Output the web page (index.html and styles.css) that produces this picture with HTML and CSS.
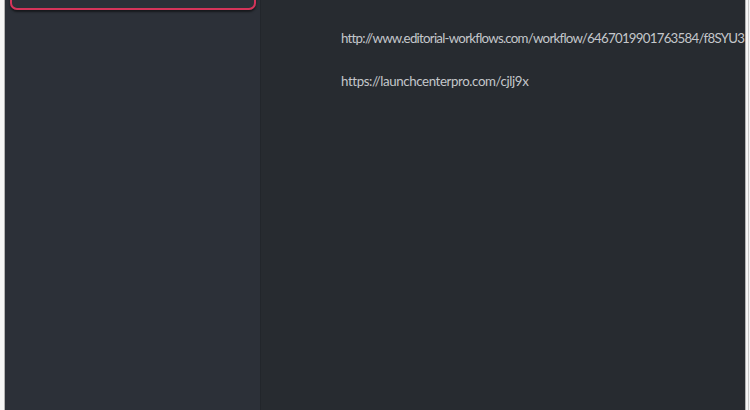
FILE: index.html
```html
<!DOCTYPE html>
<html>
<head>
<meta charset="utf-8">
<link rel="stylesheet" href="styles.css">
</head>
<body>
<div class="page">
  <div class="edge edge-left"></div>
  <aside class="sidebar">
    <div class="selected"></div>
  </aside>
  <main class="main">
    <p class="link link-long">http://www.editorial-workflows.com/workflow/6467019901763584/f8SYU3</p>
    <p class="link">https://launchcenterpro.com/cjlj9x</p>
  </main>
  <div class="edge edge-right"></div>
</div>
</body>
</html>
```

FILE: styles.css
```css
html, body {
  margin: 0;
  padding: 0;
  overflow: hidden;
  background: #f4f4f4;
}
.page {
  display: grid;
  grid-template-columns: 5px 256px minmax(0, 1fr) 5px;
  width: 750px;
  height: 410px;
}
.edge {
  background: #f6f6f6;
}
.edge-left {
  border-right: 1px solid #b4b4b4;
}
.edge-right {
  border-left: 1px solid #b4b4b4;
  border-right: 1px solid #c8c8c8;
  margin-right: 1px;
}
.sidebar {
  background: #2c3038;
  border-right: 1px solid #22262b;
  padding: 0 4px 0 5px;
}
.selected {
  margin-top: -20px;
  height: 26px;
  border: 2px solid #d5345a;
  border-radius: 7px;
  box-shadow: 0 2px 2px rgba(0,0,0,0.5);
}
.main {
  min-width: 0;
  background: #272b30;
  padding: 30px 0 0 80px;
  overflow: hidden;
  white-space: nowrap;
}
.link {
  margin: 0 0 27px 0;
  font-family: "Lato", "Open Sans", sans-serif;
  font-size: 13.3px;
  letter-spacing: -0.4px;
  line-height: 16px;
  color: #c4c7cb;
}
.link-long {
  letter-spacing: -0.75px;
}
```
